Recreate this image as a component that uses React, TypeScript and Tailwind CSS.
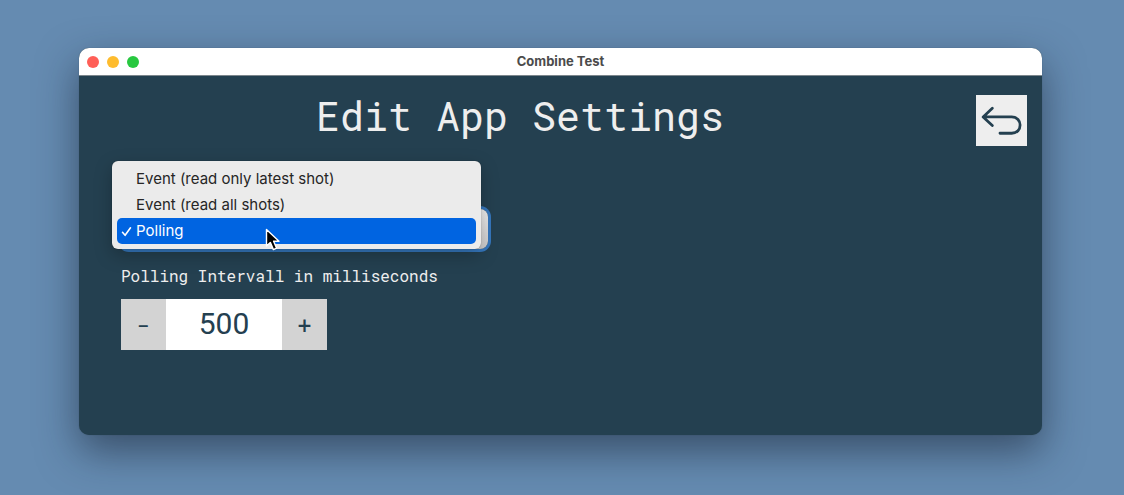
import { useState } from "react";

const modes = ["Event (read only latest shot)", "Event (read all shots)", "Polling"];

function TitleBar() {
  return (
    <div className="grid h-7 grid-cols-[1fr_auto_1fr] items-center border-b border-[#7c868c] bg-white px-2">
      <div className="flex gap-2">
        <span className="size-3 rounded-full bg-[#ff5f57]" />
        <span className="size-3 rounded-full bg-[#febc2e]" />
        <span className="size-3 rounded-full bg-[#28c840]" />
      </div>
      <span className="pb-px font-[Inter,sans-serif] text-[13px] leading-4 font-bold text-[#4b4b4b]">Combine Test</span>
    </div>
  );
}

function Pointer() {
  return (
    <svg className="pointer-events-none absolute top-[19px] left-36 h-6 w-4" viewBox="0 0 16 24" aria-hidden="true">
      <path
        d="M1.5 1.5V18L5.3 14.4L8.4 21.6L11.6 20.2L8.6 13.2H14Z"
        fill="#000"
        stroke="#fff"
        strokeWidth="1.4"
        strokeLinejoin="round"
      />
    </svg>
  );
}

export default function App() {
  const [mode, setMode] = useState(modes[2]);
  const [interval, setInterval] = useState(500);

  return (
    <div className="flex min-h-screen flex-col bg-[#658bb1] pt-12 pr-[82px] pb-[60px] pl-[79px]">
      <main className="flex flex-1 flex-col overflow-hidden rounded-[10px] bg-[#244050] shadow-[0_0_1px_rgba(40,60,70,0.6),0_16px_40px_rgba(20,30,45,0.55)]">
        <TitleBar />
        <header className="flex items-start gap-[30px] px-[15px] pt-[19px]">
          <h1 className="flex-1 pt-px text-center font-['Roboto_Mono','DejaVu_Sans_Mono',monospace] text-[40px] leading-10 text-[#eee]">
            Edit App Settings
          </h1>
          <button type="button" aria-label="Back" className="size-[51px] bg-[#eee] text-[#244050]">
            <svg viewBox="0 0 50 50" fill="none" stroke="currentColor" strokeWidth="2.7" strokeLinecap="round" strokeLinejoin="round" aria-hidden="true">
              <path d="M16 13L7 21.5L16 30M7.5 21.5H35C46 21.5 46 37.5 35 37.5H23.5" />
            </svg>
          </button>
        </header>

        <form className="flex flex-col items-start px-[42px] pt-[63px]">
          <div className="relative">
            <select
              aria-label="Read mode"
              value={mode}
              onChange={(e) => setMode(e.target.value)}
              className="block h-10 w-[367px] appearance-none rounded-lg bg-linear-to-b from-[#eee] to-[#ccc] pl-4 font-[Inter,sans-serif] text-base text-[#222] ring-3 ring-[#3577bd] outline-none"
            >
              {modes.map((m) => (
                <option key={m}>{m}</option>
              ))}
            </select>
            <ul
              role="listbox"
              aria-label="Read mode options"
              className="absolute -top-12 -left-[9px] w-[369px] rounded-md bg-[#ebebeb] p-[5px] font-[Inter,sans-serif] text-[15px] leading-[26px] text-[#262626] shadow-[0_0_1px_rgba(0,0,0,0.5),0_6px_18px_rgba(0,0,0,0.25)]"
            >
              {modes.map((m) => (
                <li
                  key={m}
                  role="option"
                  aria-selected={m === mode}
                  onClick={() => setMode(m)}
                  className="flex items-center rounded-[5px] pl-1 aria-selected:bg-[#0064e1] aria-selected:text-white"
                >
                  <span className="w-[15px]">
                    {m === mode && (
                      <svg className="size-3" viewBox="0 0 12 12" fill="none" stroke="currentColor" strokeWidth="1.6" strokeLinecap="round" strokeLinejoin="round" aria-hidden="true">
                        <path d="M1.5 7.3L4.1 10.3L9.5 2.8" />
                      </svg>
                    )}
                  </span>
                  {m}
                </li>
              ))}
            </ul>
            <Pointer />
          </div>

          <label
            htmlFor="interval"
            className="pt-[15px] font-['Roboto_Mono','DejaVu_Sans_Mono',monospace] text-base leading-6 text-[#eee]"
          >
            Polling Intervall in milliseconds
          </label>
          <div className="mt-[11px] flex h-[51px] font-[Roboto,sans-serif] text-[#244050]">
            <button type="button" aria-label="Decrease" onClick={() => setInterval(interval - 1)} className="w-[45px] bg-[#d3d3d3] font-['Roboto_Mono',monospace] text-2xl">
              -
            </button>
            <input
              id="interval"
              type="text"
              inputMode="numeric"
              value={interval}
              onChange={(e) => setInterval(Number(e.target.value) || 0)}
              className="w-[116px] bg-white pb-0.5 text-center text-3xl outline-none"
            />
            <button type="button" aria-label="Increase" onClick={() => setInterval(interval + 1)} className="w-[45px] bg-[#d3d3d3] font-['Roboto_Mono',monospace] text-2xl">
              +
            </button>
          </div>
        </form>
      </main>
    </div>
  );
}
